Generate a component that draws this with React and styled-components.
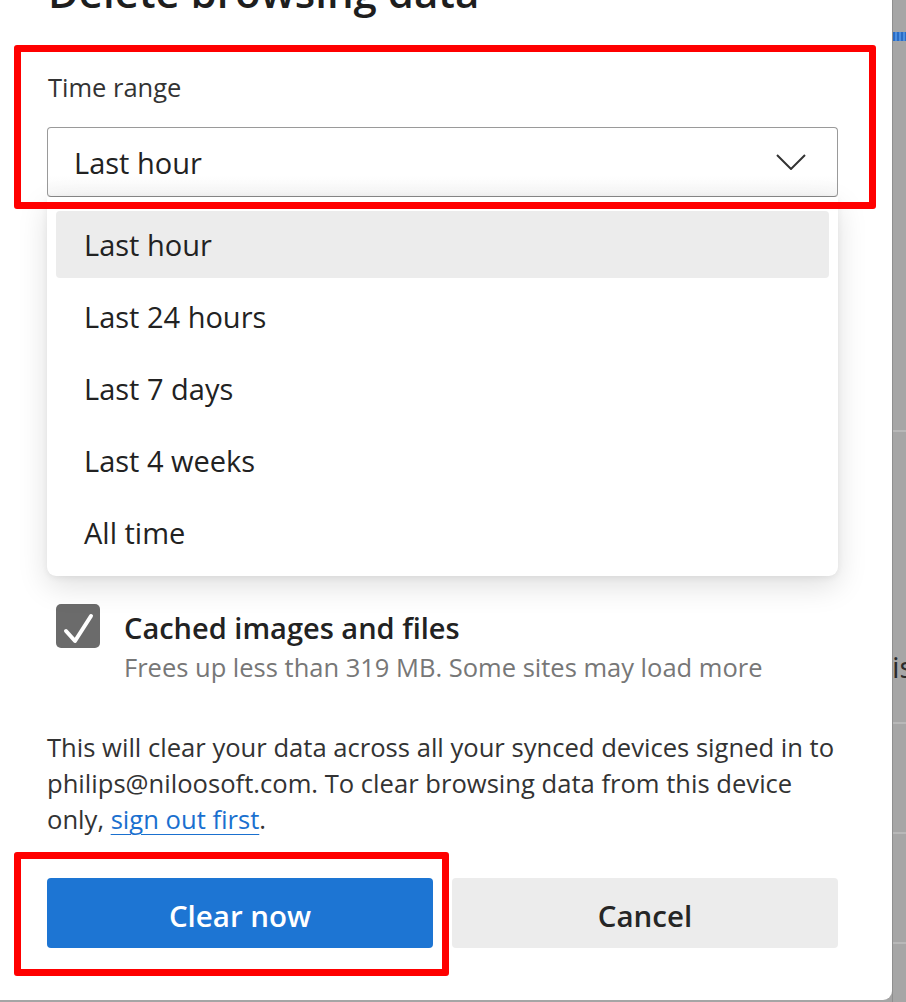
import React from "react";
import styled, { createGlobalStyle } from "styled-components";

const GlobalStyle = createGlobalStyle`
  html, body { margin: 0; padding: 0; }
  body {
    background: #a5a5a5;
    font-family: "Open Sans", "Noto Sans", "Liberation Sans", sans-serif;
    overflow: hidden;
  }
`;

const Page = styled.div`
  display: flex;
  width: 906px;
  height: 1002px;
  overflow: hidden;
`;

const Dialog = styled.div`
  width: 892px;
  height: 1000px;
  flex: none;
  box-sizing: border-box;
  background: #ffffff;
  border-bottom-right-radius: 9px;
  padding: 0 54px 0 47px;
  display: flex;
  flex-direction: column;
`;

const Title = styled.h1`
  margin: -28px 0 0 1px;
  font-size: 42px;
  line-height: 40px;
  font-weight: 600;
  color: #1e1e1e;
  white-space: nowrap;
`;

const Field = styled.div`
  position: relative;
  margin-top: 58px;
  display: flex;
  flex-direction: column;
`;

const Annotation = styled.div`
  position: absolute;
  top: ${(p) => p.$top}px;
  bottom: ${(p) => p.$bottom}px;
  left: ${(p) => p.$left}px;
  right: ${(p) => p.$right}px;
  border: 7px solid #ff0000;
  border-radius: 3px;
  pointer-events: none;
  z-index: 5;
`;

const Label = styled.div`
  font-size: 25.5px;
  line-height: 34px;
  color: #333333;
  padding-left: 1px;
`;

const Select = styled.div`
  margin-top: 23px;
  height: 70px;
  box-sizing: border-box;
  border: 1px solid #9a9a9a;
  border-bottom-color: #8a8a8a;
  border-radius: 4px;
  background: linear-gradient(#ffffff 70%, #f7f7f7);
  display: flex;
  align-items: center;
  justify-content: space-between;
  padding: 0 31px 0 26px;
  font-size: 29px;
  color: #222222;
`;

const Chevron = () => (
  <svg width="30" height="16" viewBox="0 0 30 16" fill="none">
    <polyline points="1,1 15,15 29,1" stroke="#333" strokeWidth="2" strokeLinejoin="miter" />
  </svg>
);

const Menu = styled.div`
  background: #ffffff;
  border-radius: 0 0 9px 9px;
  box-shadow: 0 10px 30px rgba(0, 0, 0, 0.13), 0 2px 6px rgba(0, 0, 0, 0.06);
  padding: 14px 9px 10px;
  display: flex;
  flex-direction: column;
  gap: 5px;
  position: relative;
  z-index: 2;
`;

const MenuItem = styled.div`
  height: 67px;
  display: flex;
  align-items: center;
  padding-left: 28px;
  border-radius: 4px;
  font-size: 29px;
  color: #222222;
  background: ${(p) => (p.$selected ? "#ececec" : "transparent")};
`;

const CheckRow = styled.div`
  margin-top: 28px;
  display: flex;
  align-items: flex-start;
  padding-left: 9px;
  gap: 24px;
`;

const Checkbox = styled.div`
  width: 44px;
  height: 44px;
  flex: none;
  border-radius: 5px;
  background: #6b6b6b;
  display: flex;
  align-items: center;
  justify-content: center;
`;

const CheckText = styled.div`
  display: flex;
  flex-direction: column;
`;

const CheckTitle = styled.div`
  font-size: 29px;
  font-weight: 600;
  line-height: 48px;
  color: #222222;
`;

const CheckSub = styled.div`
  font-size: 25.5px;
  line-height: 30px;
  color: #777777;
`;

const Notice = styled.p`
  margin: 48px 0 0;
  font-size: 25.6px;
  line-height: 36px;
  color: #333333;
`;

const Link = styled.a`
  color: #1a70cf;
  text-decoration: underline;
  text-underline-offset: 5px;
  text-decoration-thickness: 1px;
`;

const Buttons = styled.div`
  margin-top: 40px;
  display: grid;
  grid-template-columns: 1fr 1fr;
  gap: 19px;
`;

const ButtonWrap = styled.div`
  position: relative;
`;

const Button = styled.button`
  width: 100%;
  height: 70px;
  border: none;
  border-radius: 4px;
  padding: 5px 0 0;
  font-family: inherit;
  font-size: 29.5px;
  font-weight: 600;
  background: ${(p) => (p.$primary ? "#1d75d3" : "#ececec")};
  color: ${(p) => (p.$primary ? "#ffffff" : "#262626")};
`;

const Side = styled.div`
  flex: 1;
  display: flex;
  flex-direction: column;
  border-left: 1px solid #8f8f8f;
  background: #a6a6a6;
  overflow: hidden;
`;

const SideMarker = styled.div`
  margin-top: 32px;
  height: 9px;
  background: repeating-linear-gradient(90deg, #2a6cc4 0 2px, #4b8ee0 2px 4px);
`;

const SideLine = styled.div`
  margin-top: ${(p) => p.$gap}px;
  height: 2px;
  background: #b8b8b8;
`;

const SideText = styled.div`
  margin-top: ${(p) => p.$gap}px;
  margin-left: -1px;
  font-size: 30px;
  line-height: 30px;
  color: #2c2c2c;
  white-space: nowrap;
`;

const options = ["Last hour", "Last 24 hours", "Last 7 days", "Last 4 weeks", "All time"];

export default function App() {
  return (
    <>
      <GlobalStyle />
      <Page>
        <Dialog>
          <Title>Delete browsing data</Title>
          <Field>
            <Annotation $top={-25} $bottom={-12} $left={-33} $right={-38} />
            <Label>Time range</Label>
            <Select>
              <span>Last hour</span>
              <Chevron />
            </Select>
          </Field>
          <Menu>
            {options.map((o, i) => (
              <MenuItem key={o} $selected={i === 0}>
                {o}
              </MenuItem>
            ))}
          </Menu>
          <CheckRow>
            <Checkbox>
              <svg width="44" height="44" viewBox="0 0 44 44" fill="none">
                <polyline points="10,27 19,37 35,12" stroke="#fff" strokeWidth="4" strokeLinecap="round" strokeLinejoin="round" />
              </svg>
            </Checkbox>
            <CheckText>
              <CheckTitle>Cached images and files</CheckTitle>
              <CheckSub>Frees up less than 319 MB. Some sites may load more</CheckSub>
            </CheckText>
          </CheckRow>
          <Notice>
            This will clear your data across all your synced devices signed in to philips@niloosoft.com. To clear
            browsing data from this device only, <Link href="#">sign out first</Link>.
          </Notice>
          <Buttons>
            <ButtonWrap>
              <Annotation $top={-26} $bottom={-28} $left={-33} $right={-16} />
              <Button $primary>Clear now</Button>
            </ButtonWrap>
            <ButtonWrap>
              <Button>Cancel</Button>
            </ButtonWrap>
          </Buttons>
        </Dialog>
        <Side>
          <SideMarker />
          <SideLine $gap={389} />
          <SideText $gap={220}>is</SideText>
          <SideLine $gap={40} />
          <SideLine $gap={108} />
          <SideLine $gap={108} />
        </Side>
      </Page>
    </>
  );
}
